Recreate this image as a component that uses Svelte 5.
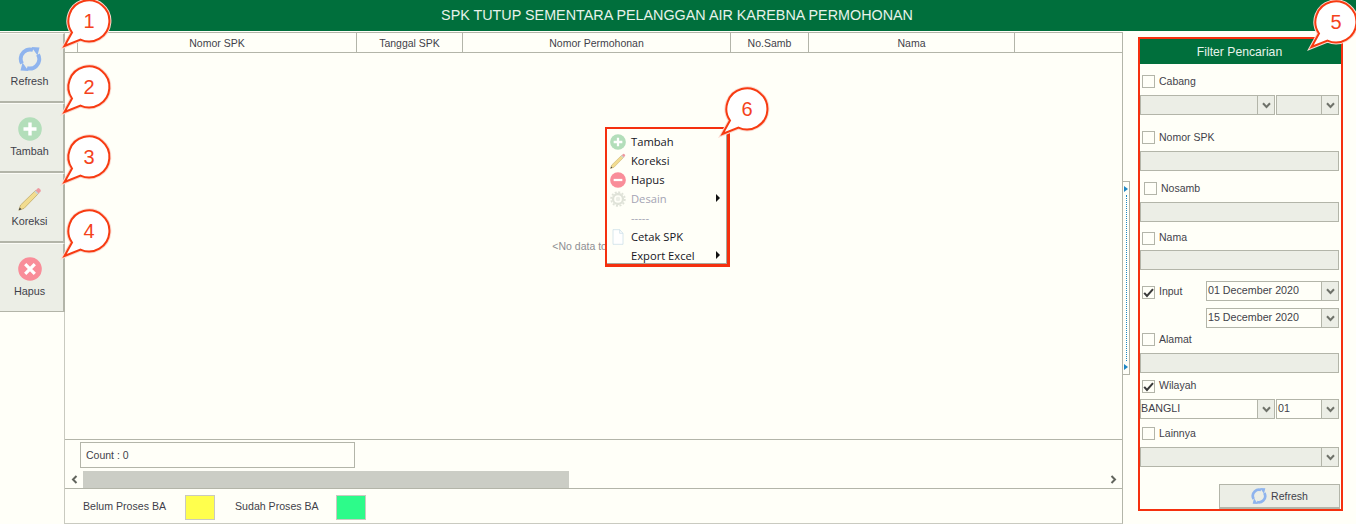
<script>
  const columns = [
    { label: 'Nomor SPK', width: 279 },
    { label: 'Tanggal SPK', width: 106 },
    { label: 'Nomor Permohonan', width: 268 },
    { label: 'No.Samb', width: 78 },
    { label: 'Nama', width: 206 }
  ];

  const tools = [
    { label: 'Refresh', icon: 'refresh' },
    { label: 'Tambah', icon: 'plus' },
    { label: 'Koreksi', icon: 'pencil' },
    { label: 'Hapus', icon: 'cross' }
  ];

  const menu = [
    { label: 'Tambah', icon: 'plus' },
    { label: 'Koreksi', icon: 'pencil' },
    { label: 'Hapus', icon: 'minus' },
    { label: 'Desain', icon: 'gear', disabled: true, sub: true },
    { label: '-----', disabled: true },
    { label: 'Cetak SPK', icon: 'doc' },
    { label: 'Export Excel', sub: true }
  ];

  // callout centres, these sit on top of everything
  const callouts = [
    { n: 1, x: 89, y: 21 },
    { n: 2, x: 89, y: 87 },
    { n: 3, x: 89, y: 157 },
    { n: 4, x: 89, y: 231 },
    { n: 5, x: 1336, y: 22 },
    { n: 6, x: 747, y: 109 }
  ];
</script>

{#snippet icon(name, size)}
  <svg class="icon" width={size} height={size} viewBox="0 0 24 24">
    {#if name === 'refresh'}
      <g fill="none" stroke="#8fb4ee" stroke-width="4">
        <path d="M4 16.5A9.4 9.4 0 0 1 5.6 5.2 9.4 9.4 0 0 1 15 2.9" />
        <path d="M20 7.5A9.4 9.4 0 0 1 18.4 18.8 9.4 9.4 0 0 1 9 21.1" />
      </g>
      <path d="M13.5 0 21.5 0.5 19.5 8.5Z M10.5 24 2.5 23.5 4.5 15.5Z" fill="#8fb4ee" />
    {:else if name === 'plus'}
      <circle cx="12" cy="12" r="11.8" fill="#b3deba" />
      <path d="M12 5.5v13M5.5 12h13" stroke="#fff" stroke-width="3.4" />
    {:else if name === 'minus'}
      <circle cx="12" cy="12" r="11.8" fill="#f98d99" />
      <path d="M5.5 12h13" stroke="#fff" stroke-width="3.4" />
    {:else if name === 'cross'}
      <circle cx="12" cy="12" r="11.8" fill="#f98d99" />
      <path d="M7.2 7.2l9.6 9.6M16.8 7.2l-9.6 9.6" stroke="#fff" stroke-width="3.2" />
    {:else if name === 'pencil'}
      <path d="M0.8 23.2 2.6 18 17.6 3.4 20.6 6.4 6 21.4Z" fill="#f2dc8f" stroke="#b9a25f" stroke-width="0.7" />
      <path d="M17.6 3.4 20.6 6.4 22.6 4.4q0.6-0.9-0.2-1.9l-1-1q-1-0.8-1.9-0.1Z" fill="#ee9aa0" />
      <path d="M17 4l3 3" stroke="#c5d3de" stroke-width="1.6" />
      <path d="M0.8 23.2 1.7 20.4 3.6 22.3Z" fill="#444" />
    {:else if name === 'gear'}
      <circle cx="12" cy="12" r="7.5" fill="none" stroke="#dfe2d8" stroke-width="3.4" />
      <circle cx="12" cy="12" r="10.3" fill="none" stroke="#dfe2d8" stroke-width="2.6" stroke-dasharray="3 2.4" />
      <circle cx="12" cy="12" r="3.4" fill="#eceee6" />
    {:else if name === 'doc'}
      <path d="M4.5 1h10l5 5.5V23h-15Z" fill="#fff" stroke="#c4dbe6" stroke-width="1" />
      <path d="M14.5 1v5.5h5" fill="none" stroke="#c4dbe6" stroke-width="1" />
    {/if}
  </svg>
{/snippet}

{#snippet check(label, checked, cls)}
  <label class="check {cls}">
    <span class="box">
      {#if checked}
        <svg width="11" height="11" viewBox="0 0 11 11"><path d="M1.2 5.8 4 9 10 2.2" fill="none" stroke="#3a3a3a" stroke-width="2" /></svg>
      {/if}
    </span>
    <span class="check-label">{label}</span>
  </label>
{/snippet}

{#snippet arrow()}
  <span class="arrow">
    <svg width="9" height="7" viewBox="0 0 9 7"><path d="M1 1.2 4.5 5 8 1.2" fill="none" stroke="#6f726a" stroke-width="2" /></svg>
  </span>
{/snippet}

<div class="page">
  <header class="title">SPK TUTUP SEMENTARA PELANGGAN AIR KAREBNA PERMOHONAN</header>

  <div class="main">
    <aside class="toolbar">
      {#each tools as tool}
        <button type="button" class="tool">
          {@render icon(tool.icon, 24)}
          <span>{tool.label}</span>
        </button>
      {/each}
    </aside>

    <section class="grid">
      <div class="grid-head">
        <div class="star">*</div>
        {#each columns as col}
          <div class="col" style="width: {col.width}px">{col.label}</div>
        {/each}
      </div>

      <div class="grid-body">
        <span class="empty">&lt;No data to display&gt;</span>
        <div class="menu">
          {#each menu as item}
            <div class="menu-item" class:disabled={item.disabled}>
              <span class="menu-icon">
                {#if item.icon}{@render icon(item.icon, 16)}{/if}
              </span>
              <span>{item.label}</span>
              {#if item.sub}<span class="caret"></span>{/if}
            </div>
          {/each}
        </div>
      </div>

      <div class="count-row">
        <div class="count">Count : 0</div>
      </div>

      <div class="scrollbar">
        <span class="scroll-btn">
          <svg width="7" height="9" viewBox="0 0 7 9"><path d="M5.5 1 2 4.5 5.5 8" fill="none" stroke="#62655e" stroke-width="2" /></svg>
        </span>
        <div class="track"><div class="thumb"></div></div>
        <span class="scroll-btn">
          <svg width="7" height="9" viewBox="0 0 7 9"><path d="M1.5 1 5 4.5 1.5 8" fill="none" stroke="#62655e" stroke-width="2" /></svg>
        </span>
      </div>

      <div class="legend">
        <span>Belum Proses BA</span>
        <span class="swatch yellow"></span>
        <span class="second">Sudah Proses BA</span>
        <span class="swatch green"></span>
      </div>
    </section>

    <div class="splitter">
      <span class="tri"></span>
      <span class="dots"></span>
      <span class="tri"></span>
    </div>

    <aside class="filter">
      <div class="filter-head">Filter Pencarian</div>

      {@render check('Cabang', false, 'mt11')}
      <div class="pair mt7">
        <div class="field off wide"><span class="value"></span>{@render arrow()}</div>
        <div class="field off narrow"><span class="value"></span>{@render arrow()}</div>
      </div>

      {@render check('Nomor SPK', false, 'mt16')}
      <div class="field off mt7"></div>

      {@render check('Nosamb', false, 'mt11 shifted')}
      <div class="field off mt7"></div>

      {@render check('Nama', false, 'mt10 up')}
      <div class="field off mt5"></div>

      <div class="input-row mt11">
        {@render check('Input', true, 'mt5 up')}
        <div class="dates">
          <div class="field"><span class="value">01 December 2020</span>{@render arrow()}</div>
          <div class="field"><span class="value">15 December 2020</span>{@render arrow()}</div>
        </div>
      </div>

      {@render check('Alamat', false, 'mt5')}
      <div class="field off mt7"></div>

      {@render check('Wilayah', true, 'mt7 up')}
      <div class="pair mt6">
        <div class="field wide"><span class="value tight">BANGLI</span>{@render arrow()}</div>
        <div class="field narrow"><span class="value">01</span>{@render arrow()}</div>
      </div>

      {@render check('Lainnya', false, 'mt8')}
      <div class="field off mt7"><span class="value"></span>{@render arrow()}</div>

      <button type="button" class="refresh">
        {@render icon('refresh', 16)}
        <span>Refresh</span>
      </button>
    </aside>
  </div>

  {#each callouts as c}
    <svg class="callout" style="left: {c.x - 30}px; top: {c.y - 26}px" width="56" height="54" viewBox="-30 -26 56 54">
      <path d="M-17 11.5-24.5 25-8.5 18.6A20.5 20.5 0 1 0-17 11.5Z" fill="#fff" stroke="#fbd9cf" stroke-width="4" />
      <path d="M-17 11.5-24.5 25-8.5 18.6A20.5 20.5 0 1 0-17 11.5Z" fill="#fff" stroke="#f73b12" stroke-width="2" />
      <text x="0" y="7" text-anchor="middle">{c.n}</text>
    </svg>
  {/each}
</div>

<style>
  :global(body) {
    margin: 0;
    background: #fffff8;
  }

  .page {
    position: relative;
    width: 1356px;
    height: 524px;
    overflow: hidden;
    display: flex;
    flex-direction: column;
    background: #fffff8;
    font-family: "Liberation Sans", Arial, sans-serif;
    font-size: 10.5px;
    color: #3f3f4a;
  }

  .title {
    height: 31px;
    flex: none;
    padding-right: 2px;
    background: #006f3c;
    color: #e6f3ea;
    font-size: 14.35px;
    line-height: 30px;
    text-align: center;
  }

  .main {
    flex: 1;
    display: flex;
    min-height: 0;
    padding-top: 1px;
  }

  /* left toolbar */
  .toolbar {
    width: 65px;
    flex: none;
    display: flex;
    flex-direction: column;
    border-top: 1px solid #b3b5a9;
    border-right: 1px solid #c9cac0;
    box-sizing: border-box;
  }

  .tool {
    width: 65px;
    height: 70px;
    flex: none;
    box-sizing: border-box;
    padding: 13px 4px 0 0;
    margin: 0;
    display: flex;
    flex-direction: column;
    align-items: center;
    gap: 4px;
    background: #eceee6;
    border: 0;
    border-right: 2px solid #b3b5a9;
    border-bottom: 2px solid #b3b5a9;
    border-top: 1px solid #fbfbf6;
    font: inherit;
    font-size: 10.8px;
    color: inherit;
  }

  .tool:last-child {
    border-bottom-width: 1px;
    height: 69px;
  }

  .icon {
    display: block;
    flex: none;
  }

  /* data grid */
  .grid {
    width: 1058px;
    height: 492px;
    flex: none;
    display: flex;
    flex-direction: column;
    box-sizing: border-box;
    border: 1px solid #b3b5a9;
    border-left: 0;
    border-bottom-color: #c9cac0;
  }

  .grid-head {
    height: 20px;
    flex: none;
    box-sizing: border-box;
    display: flex;
    border-bottom: 1px solid #b3b5a9;
    line-height: 20px;
    text-align: center;
  }

  .star {
    width: 13px;
    flex: none;
    box-sizing: border-box;
    border-right: 1px solid #b3b5a9;
  }

  .col {
    flex: none;
    box-sizing: border-box;
    border-right: 1px solid #b3b5a9;
  }

  .grid-body {
    position: relative;
    flex: 1;
    min-height: 0;
    box-sizing: border-box;
    padding-left: 14px;
    display: flex;
    align-items: center;
    justify-content: center;
    color: #8e8e92;
  }

  .menu {
    position: absolute;
    left: 540px;
    top: 74px;
    width: 125px;
    height: 140px;
    box-sizing: border-box;
    padding: 3px 0 0 3px;
    border: 2px solid #f5300f;
    border-width: 2px 3px 3px 2px;
    background: #fffff8;
    box-shadow: inset -1px -1px 0 #a8a89e;
    font-family: "Open Sans", "Noto Sans", sans-serif;
    font-size: 11.2px;
    color: #16161e;
  }

  .menu-item {
    height: 19px;
    display: flex;
    align-items: center;
    gap: 5px;
    position: relative;
  }

  .menu-item.disabled {
    color: #a4a4b4;
  }

  .menu-icon {
    width: 16px;
    height: 16px;
    flex: none;
  }

  .caret {
    position: absolute;
    right: 7px;
    top: 5px;
    border-left: 4px solid #111;
    border-top: 4px solid transparent;
    border-bottom: 4px solid transparent;
  }

  .count-row {
    height: 32px;
    flex: none;
    box-sizing: border-box;
    border-top: 1px solid #b3b5a9;
    padding: 2px 0 0 15px;
  }

  .count {
    width: 275px;
    height: 26px;
    box-sizing: border-box;
    border: 1px solid #b3b5a9;
    padding-left: 5px;
    line-height: 25px;
  }

  .scrollbar {
    height: 18px;
    flex: none;
    display: flex;
    box-sizing: border-box;
    border-bottom: 1px solid #b3b5a9;
  }

  .scroll-btn {
    width: 18px;
    flex: none;
    display: flex;
    align-items: center;
    justify-content: center;
  }

  .track {
    flex: 1;
  }

  .thumb {
    width: 486px;
    height: 100%;
    background: #cbcdc5;
  }

  .legend {
    height: 34px;
    flex: none;
    display: flex;
    align-items: center;
    padding-left: 18px;
    font-size: 10.6px;
  }

  .swatch {
    width: 30px;
    height: 25px;
    box-sizing: border-box;
    margin: 2px 0 0 19px;
    border: 1px solid #c9cac0;
  }

  .second {
    margin-left: 20px;
  }

  .second + .swatch {
    margin-left: 17px;
  }

  .yellow {
    background: #ffff4d;
  }

  .green {
    background: #2dfb8a;
  }

  /* splitter */
  .splitter {
    width: 7px;
    height: 194px;
    flex: none;
    margin-top: 149px;
    box-sizing: border-box;
    border: 1px solid #b3b5a9;
    border-left: 0;
    display: flex;
    flex-direction: column;
    align-items: center;
    gap: 3px;
    padding: 4px 0;
  }

  .tri {
    flex: none;
    border-left: 4px solid #1c86c4;
    border-top: 3px solid transparent;
    border-bottom: 3px solid transparent;
  }

  .dots {
    flex: 1;
    border-left: 1px dotted #1c86c4;
  }

  /* filter panel */
  .filter {
    width: 205px;
    height: 474px;
    flex: none;
    margin: 5px 0 0 8px;
    box-sizing: border-box;
    border: 2px solid #f5300f;
    position: relative;
  }

  .filter-head {
    height: 25px;
    padding-right: 2px;
    background: #006f3c;
    color: #e6f3ea;
    font-size: 12.2px;
    line-height: 26px;
    text-align: center;
  }

  .check {
    display: flex;
    align-items: center;
    gap: 4px;
    height: 13px;
    padding-left: 2px;
  }

  .check.shifted {
    padding-left: 4px;
  }

  .check-label {
    padding-bottom: 2px;
  }

  .check.up .check-label {
    padding-bottom: 4px;
  }

  .box {
    width: 13px;
    height: 13px;
    flex: none;
    box-sizing: border-box;
    border: 1px solid #b3b5a9;
    display: flex;
    align-items: center;
    justify-content: center;
  }

  .field {
    width: 199px;
    height: 20px;
    box-sizing: border-box;
    border: 1px solid #b3b5a9;
    display: flex;
  }

  .field.off {
    background: #eceee6;
  }

  .value {
    flex: 1;
    min-width: 0;
    line-height: 16px;
    padding-left: 1px;
    white-space: nowrap;
    font-size: 10.7px;
  }

  .value.tight {
    padding-left: 0;
  }

  .arrow {
    width: 17px;
    flex: none;
    box-sizing: border-box;
    border-left: 1px solid #b3b5a9;
    background: #eceee6;
    display: flex;
    align-items: center;
    justify-content: center;
  }

  .pair {
    display: flex;
    gap: 1px;
    width: 199px;
  }

  .wide {
    width: 135px;
  }

  .narrow {
    width: 63px;
  }

  .input-row {
    display: flex;
    justify-content: space-between;
    width: 199px;
  }

  .dates {
    width: 133px;
    display: flex;
    flex-direction: column;
    gap: 7px;
  }

  .dates .field {
    width: 133px;
  }

  .refresh {
    position: absolute;
    left: 79px;
    top: 445px;
    width: 121px;
    height: 25px;
    box-sizing: border-box;
    display: flex;
    align-items: center;
    justify-content: center;
    gap: 4px;
    padding: 0;
    background: #eceee6;
    border: 1px solid #b3b5a9;
    border-bottom-width: 2px;
    font: inherit;
    color: inherit;
  }

  .mt5 { margin-top: 5px; }
  .mt6 { margin-top: 6px; }
  .mt7 { margin-top: 7px; }
  .mt8 { margin-top: 8px; }
  .mt10 { margin-top: 10px; }
  .mt11 { margin-top: 11px; }
  .mt16 { margin-top: 16px; }

  .callout {
    position: absolute;
    overflow: visible;
  }

  .callout text {
    font-family: "Liberation Sans", Arial, sans-serif;
    font-size: 20px;
    fill: #f4421c;
  }
</style>
